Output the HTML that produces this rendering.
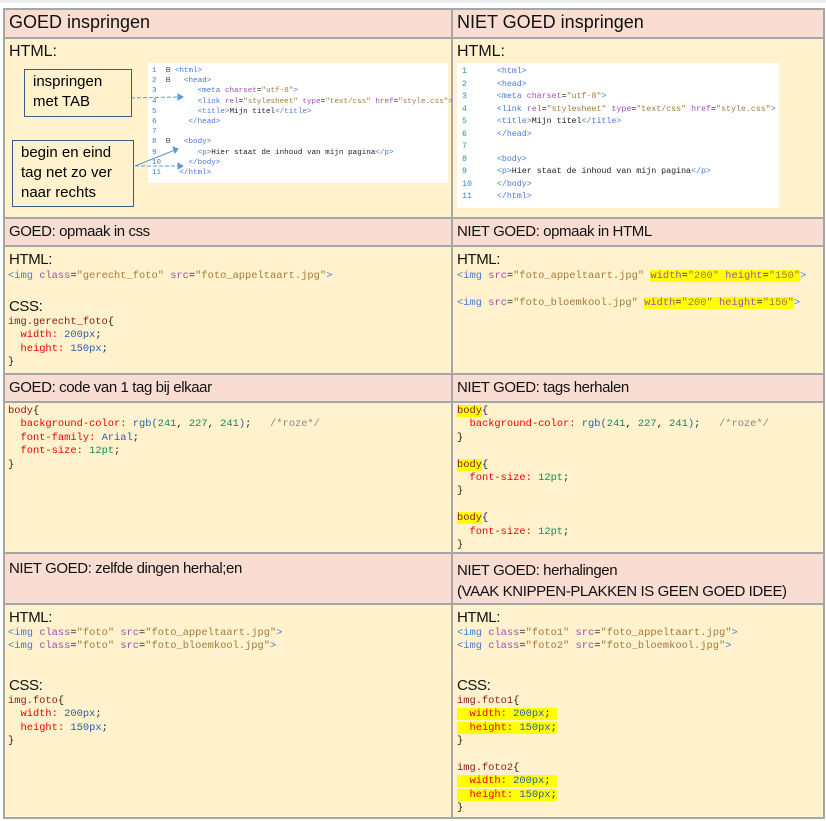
<!DOCTYPE html>
<html><head><meta charset="utf-8"><style>
body{margin:0;width:826px;height:821px;background:#fff;position:relative;overflow:hidden;font-family:"Liberation Sans",sans-serif;}
.a{position:absolute;}
.h{background:#f9dcd2;}
.c{background:#fff2cc;}
.hl{position:absolute;background:#a6a6a6;height:2px;left:3px;width:822px;}
.vl{position:absolute;background:#a6a6a6;width:2px;}
.t{position:absolute;font-size:15px;letter-spacing:-0.4px;color:#111;white-space:nowrap;}
pre{position:absolute;margin:0;font-family:"Liberation Mono",monospace;font-size:10.4px;line-height:13.4px;color:#222;}
.tg{color:#4b78d6}.at{color:#a050b0}.st{color:#a47a3c}.se{color:#8b1a1a}.pr{color:#e00}.v{color:#2a5fae}.n{color:#17875a}.cm{color:#888}
.y{background:#ffff00}
.sc{position:absolute;background:#fff;}
.sc pre{font-size:7.6px;line-height:10.2px;}
.ln{color:#3a8aa8}
.box{position:absolute;border:1.5px solid #3d5a80;background:#fff2cc;font-size:15px;line-height:20px;padding:2px 0 0 8px;color:#000;box-sizing:border-box;}
</style></head><body>
<div class="a" style="left:0;top:0;width:826px;height:3px;background:#eee"></div>
<div class="a h" style="left:3px;top:8px;width:822px;height:30px"></div>
<div class="a c" style="left:3px;top:38px;width:822px;height:180px"></div>
<div class="a h" style="left:3px;top:218px;width:822px;height:28px"></div>
<div class="a c" style="left:3px;top:246px;width:822px;height:128px"></div>
<div class="a h" style="left:3px;top:374px;width:822px;height:28px"></div>
<div class="a c" style="left:3px;top:402px;width:822px;height:151px"></div>
<div class="a h" style="left:3px;top:553px;width:822px;height:51px"></div>
<div class="a c" style="left:3px;top:604px;width:822px;height:214px"></div>
<div class="hl" style="top:8px"></div><div class="hl" style="top:37px"></div><div class="hl" style="top:217px"></div><div class="hl" style="top:245px"></div><div class="hl" style="top:373px"></div><div class="hl" style="top:401px"></div><div class="hl" style="top:552px"></div><div class="hl" style="top:603px"></div><div class="hl" style="top:817px"></div>
<div class="vl" style="left:3px;top:8px;height:811px"></div><div class="vl" style="left:451px;top:8px;height:811px"></div><div class="vl" style="left:823px;top:8px;height:811px"></div>

<div class="t" style="left:9px;top:12px;font-size:18px;letter-spacing:0">GOED inspringen</div>
<div class="t" style="left:457px;top:12px;font-size:18px;letter-spacing:0">NIET GOED inspringen</div>
<div class="t" style="left:9px;top:43px;font-size:16px;letter-spacing:0">HTML:</div>
<div class="t" style="left:457px;top:43px;font-size:16px;letter-spacing:0">HTML:</div>

<div class="sc" style="left:148px;top:63px;width:300px;height:120px">
<pre style="left:4px;top:3px"><span class="ln">1</span>  ⊟ <span class="tg">&lt;html&gt;</span>
<span class="ln">2</span>  ⊟   <span class="tg">&lt;head&gt;</span>
<span class="ln">3</span>         <span class="tg">&lt;meta</span> <span class="at">charset</span>=<span class="st">"utf-8"</span><span class="tg">&gt;</span>
<span class="ln">4</span>         <span class="tg">&lt;link</span> <span class="at">rel</span>=<span class="st">"stylesheet"</span> <span class="at">type</span>=<span class="st">"text/css"</span> <span class="at">href</span>=<span class="st">"style.css"</span><span class="tg">&gt;</span>
<span class="ln">5</span>         <span class="tg">&lt;title&gt;</span>Mijn titel<span class="tg">&lt;/title&gt;</span>
<span class="ln">6</span>       <span class="tg">&lt;/head&gt;</span>
<span class="ln">7</span>
<span class="ln">8</span>  ⊟   <span class="tg">&lt;body&gt;</span>
<span class="ln">9</span>         <span class="tg">&lt;p&gt;</span>Hier staat de inhoud van mijn pagina<span class="tg">&lt;/p&gt;</span>
<span class="ln">10</span>      <span class="tg">&lt;/body&gt;</span>
<span class="ln">11</span>    <span class="tg">&lt;/html&gt;</span></pre></div>
<svg class="a" style="left:0;top:0" width="826" height="300"><g stroke="#5b9bd5" stroke-width="1" fill="#5b9bd5"><line x1="131" y1="98" x2="178" y2="97" stroke-dasharray="4,2"/><polygon points="178,94 183,97 178,100"/><line x1="135" y1="166" x2="175" y2="150"/><polygon points="173,147 178,149 175,153"/><line x1="135" y1="166" x2="178" y2="166" stroke-dasharray="4,2"/><polygon points="178,163 183,166 178,169"/></g></svg>
<div class="box" style="left:24px;top:69px;width:108px;height:48px">inspringen<br>met TAB</div>
<div class="box" style="left:12px;top:140px;width:122px;height:67px">begin en eind<br>tag net zo ver<br>naar rechts</div>

<div class="sc" style="left:457px;top:63px;width:322px;height:145px">
<pre style="left:5px;top:3px;font-size:8.3px;line-height:12.5px"><span class="ln">1</span>      <span class="tg">&lt;html&gt;</span>
<span class="ln">2</span>      <span class="tg">&lt;head&gt;</span>
<span class="ln">3</span>      <span class="tg">&lt;meta</span> <span class="at">charset</span>=<span class="st">"utf-8"</span><span class="tg">&gt;</span>
<span class="ln">4</span>      <span class="tg">&lt;link</span> <span class="at">rel</span>=<span class="st">"stylesheet"</span> <span class="at">type</span>=<span class="st">"text/css"</span> <span class="at">href</span>=<span class="st">"style.css"</span><span class="tg">&gt;</span>
<span class="ln">5</span>      <span class="tg">&lt;title&gt;</span>Mijn titel<span class="tg">&lt;/title&gt;</span>
<span class="ln">6</span>      <span class="tg">&lt;/head&gt;</span>
<span class="ln">7</span>
<span class="ln">8</span>      <span class="tg">&lt;body&gt;</span>
<span class="ln">9</span>      <span class="tg">&lt;p&gt;</span>Hier staat de inhoud van mijn pagina<span class="tg">&lt;/p&gt;</span>
<span class="ln">10</span>     <span class="tg">&lt;/body&gt;</span>
<span class="ln">11</span>     <span class="tg">&lt;/html&gt;</span></pre></div>

<div class="t" style="left:9px;top:223px">GOED: opmaak in css</div>
<div class="t" style="left:457px;top:223px">NIET GOED: opmaak in HTML</div>
<div class="t" style="left:9px;top:251px">HTML:</div>
<div class="t" style="left:457px;top:251px">HTML:</div>
<pre style="left:8px;top:270px"><span class="tg">&lt;img</span> <span class="at">class</span>=<span class="st">"gerecht_foto"</span> <span class="at">src</span>=<span class="st">"foto_appeltaart.jpg"</span><span class="tg">&gt;</span></pre>
<div class="t" style="left:9px;top:298px">CSS:</div>
<pre style="left:8px;top:316px"><span class="se">img.gerecht_foto</span>{
  <span class="pr">width:</span> <span class="v">200px</span>;
  <span class="pr">height:</span> <span class="v">150px</span>;
}</pre>
<pre style="left:457px;top:270px"><span class="tg">&lt;img</span> <span class="at">src</span>=<span class="st">"foto_appeltaart.jpg"</span> <span class="y"><span class="at">width</span>=<span class="st">"200"</span> <span class="at">height</span>=<span class="st">"150"</span></span><span class="tg">&gt;</span>

<span class="tg">&lt;img</span> <span class="at">src</span>=<span class="st">"foto_bloemkool.jpg"</span> <span class="y"><span class="at">width</span>=<span class="st">"200"</span> <span class="at">height</span>=<span class="st">"150"</span></span><span class="tg">&gt;</span></pre>

<div class="t" style="left:9px;top:379px">GOED: code van 1 tag bij elkaar</div>
<div class="t" style="left:457px;top:379px">NIET GOED: tags herhalen</div>
<pre style="left:8px;top:405px"><span class="se">body</span>{
  <span class="pr">background-color:</span> <span class="v">rgb(</span><span class="n">241</span>, <span class="n">227</span>, <span class="n">241</span><span class="v">)</span>;   <span class="cm">/*roze*/</span>
  <span class="pr">font-family:</span> <span class="v">Arial</span>;
  <span class="pr">font-size:</span> <span class="n">12pt</span>;
}</pre>
<pre style="left:457px;top:405px"><span class="se y">body</span>{
  <span class="pr">background-color:</span> <span class="v">rgb(</span><span class="n">241</span>, <span class="n">227</span>, <span class="n">241</span><span class="v">)</span>;   <span class="cm">/*roze*/</span>
}

<span class="se y">body</span>{
  <span class="pr">font-size:</span> <span class="n">12pt</span>;
}

<span class="se y">body</span>{
  <span class="pr">font-size:</span> <span class="n">12pt</span>;
}</pre>

<div class="t" style="left:9px;top:560px">NIET GOED: zelfde dingen herhal;en</div>
<div class="t" style="left:457px;top:560px;line-height:21px">NIET GOED: herhalingen<br>(VAAK KNIPPEN-PLAKKEN IS GEEN GOED IDEE)</div>
<div class="t" style="left:9px;top:609px">HTML:</div>
<div class="t" style="left:457px;top:609px">HTML:</div>
<pre style="left:8px;top:627px"><span class="tg">&lt;img</span> <span class="at">class</span>=<span class="st">"foto"</span> <span class="at">src</span>=<span class="st">"foto_appeltaart.jpg"</span><span class="tg">&gt;</span>
<span class="tg">&lt;img</span> <span class="at">class</span>=<span class="st">"foto"</span> <span class="at">src</span>=<span class="st">"foto_bloemkool.jpg"</span><span class="tg">&gt;</span></pre>
<pre style="left:457px;top:627px"><span class="tg">&lt;img</span> <span class="at">class</span>=<span class="st">"foto1"</span> <span class="at">src</span>=<span class="st">"foto_appeltaart.jpg"</span><span class="tg">&gt;</span>
<span class="tg">&lt;img</span> <span class="at">class</span>=<span class="st">"foto2"</span> <span class="at">src</span>=<span class="st">"foto_bloemkool.jpg"</span><span class="tg">&gt;</span></pre>
<div class="t" style="left:9px;top:677px">CSS:</div>
<div class="t" style="left:457px;top:677px">CSS:</div>
<pre style="left:8px;top:695px"><span class="se">img.foto</span>{
  <span class="pr">width:</span> <span class="v">200px</span>;
  <span class="pr">height:</span> <span class="v">150px</span>;
}</pre>
<pre style="left:457px;top:695px"><span class="se">img.foto1</span>{
<span class="y">  <span class="pr">width:</span> <span class="v">200px</span>; </span>
<span class="y">  <span class="pr">height:</span> <span class="v">150px</span>;</span>
}

<span class="se">img.foto2</span>{
<span class="y">  <span class="pr">width:</span> <span class="v">200px</span>; </span>
<span class="y">  <span class="pr">height:</span> <span class="v">150px</span>;</span>
}</pre>
</body></html>
